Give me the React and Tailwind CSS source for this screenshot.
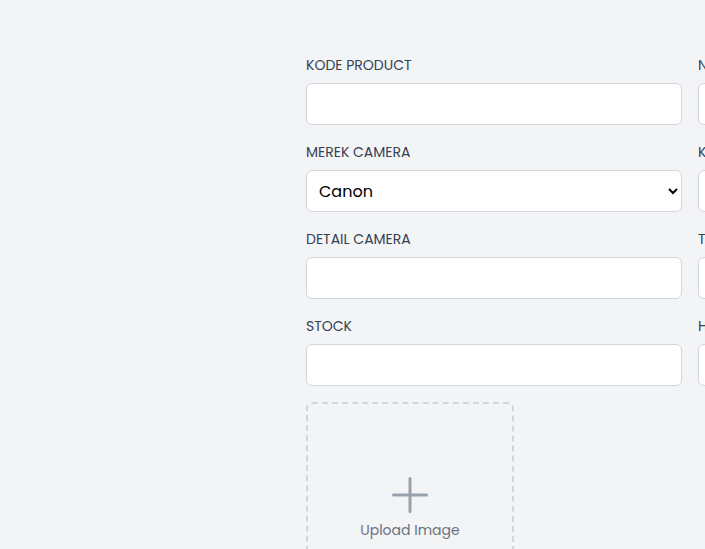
const fields = [
  { label: "KODE PRODUCT" },
  { label: "NAMA PRODUCT" },
  { label: "MEREK CAMERA", select: ["Canon", "Nikon", "Sony", "Fujifilm"] },
  { label: "KATEGORI" },
  { label: "DETAIL CAMERA" },
  { label: "TIPE" },
  { label: "STOCK" },
  { label: "HARGA" },
];

function Field({ f }) {
  return (
    <div className="flex flex-col">
      <label className="mb-2 text-sm leading-5 text-gray-700 uppercase whitespace-nowrap">{f.label}</label>
      {f.select ? (
        <select className="h-[42px] w-full rounded-md border border-gray-300 bg-white px-2 text-base text-black outline-none">
          {f.select.map((o) => (
            <option key={o}>{o}</option>
          ))}
        </select>
      ) : (
        <input type="text" className="h-[42px] w-full rounded-md border border-gray-300 bg-white px-3 text-base outline-none" />
      )}
    </div>
  );
}

export default function App() {
  return (
    <div
      className="h-screen w-screen overflow-hidden bg-gray-100"
      style={{ fontFamily: "Poppins, 'Open Sans', 'Liberation Sans', sans-serif" }}
    >
      <form className="pl-[306px] pt-[55px]">
        <div className="grid w-[768px] grid-cols-2 gap-x-4 gap-y-[17px]">
          {fields.map((f) => (
            <Field key={f.label} f={f} />
          ))}
        </div>

        <div className="mt-4 flex h-[208px] w-[208px] flex-col items-center justify-center rounded-md border-2 border-dashed border-gray-300 pt-1">
          <svg width="36" height="36" viewBox="0 0 36 36" className="text-gray-400">
            <path d="M18 1.5v33M1.5 18h33" stroke="currentColor" strokeWidth="3" strokeLinecap="round" fill="none" />
          </svg>
          <span className="mt-[7px] text-sm text-gray-500">Upload Image</span>
        </div>
      </form>
    </div>
  );
}
